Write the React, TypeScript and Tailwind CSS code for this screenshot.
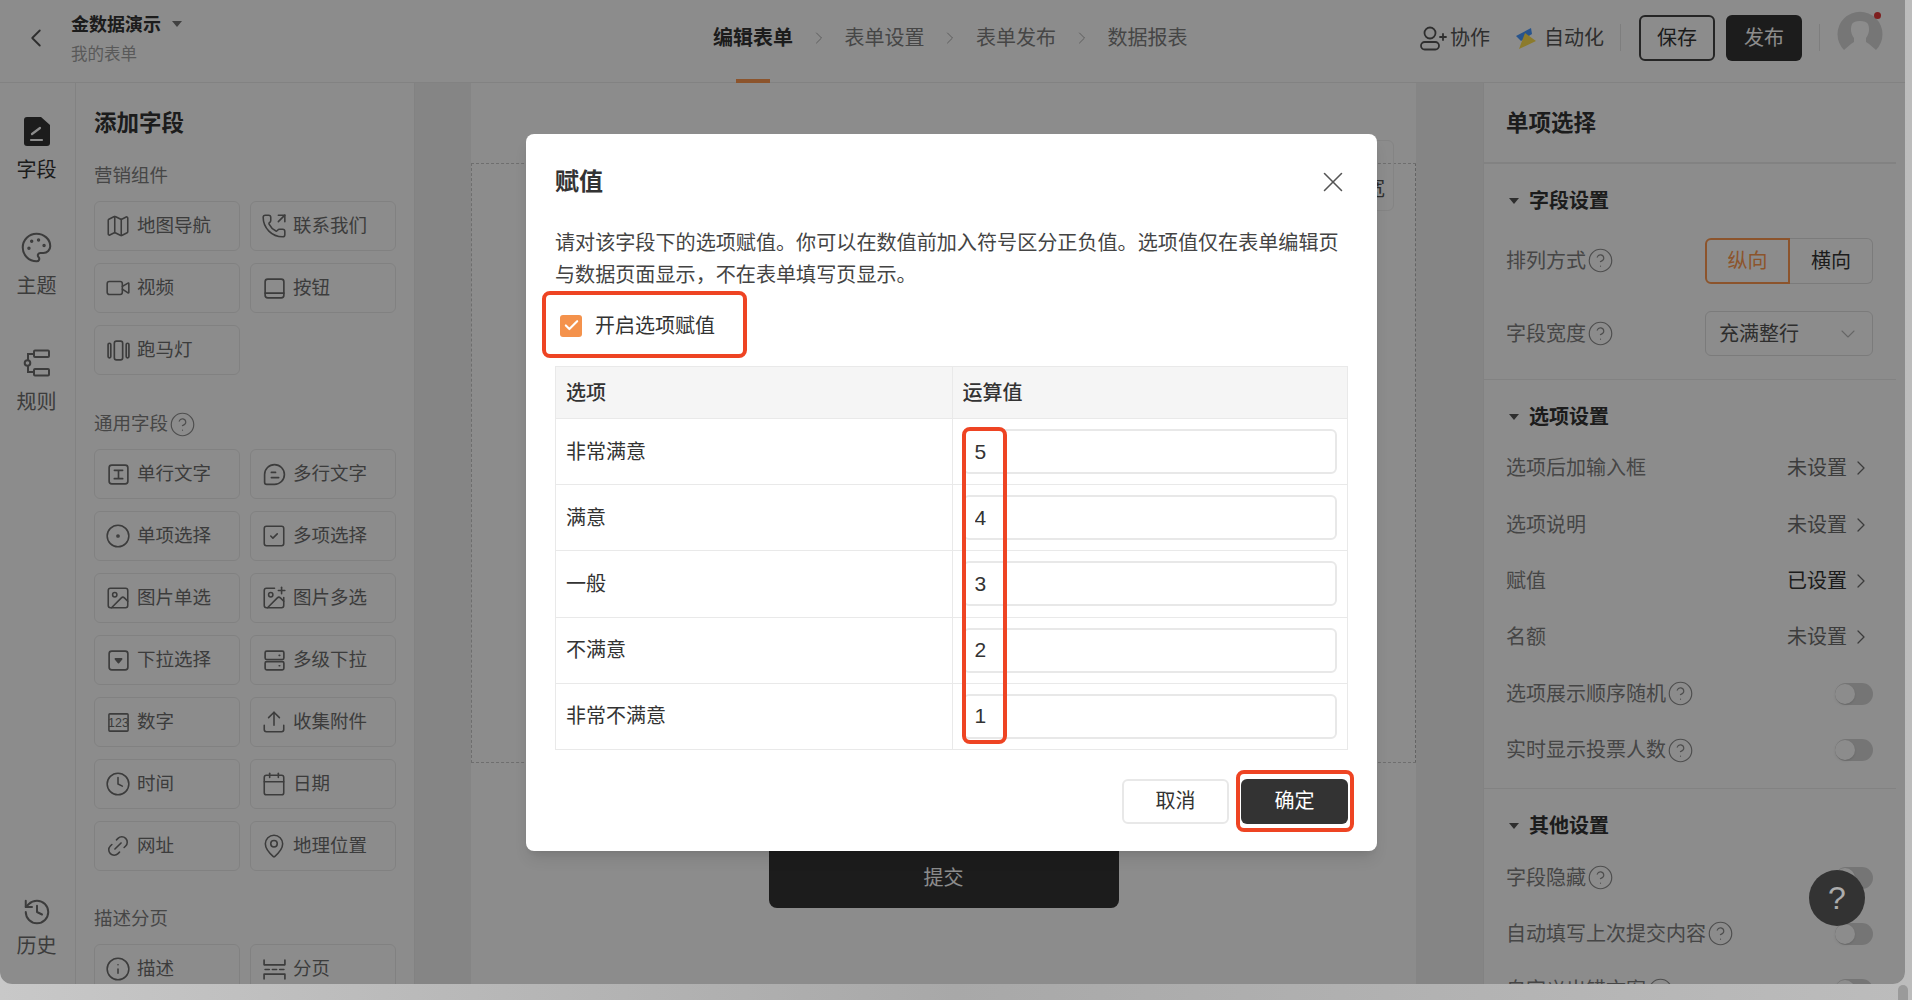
import type { ReactNode } from "react"
import {
  Calendar, Check, ChevronDown, ChevronLeft, ChevronRight, CircleDot, CircleHelp, Clock,
  History, ImagePlus, Image as ImageIcon, Info, Link2, Map as MapIcon, MapPin, Palette,
  PhoneOutgoing, SquareCheck, Upload, Video, X,
} from "lucide-react"

const FONT = "[font-family:'Liberation_Sans','Noto_Sans_CJK_SC',sans-serif]"

type IconProps = { children: ReactNode }

const Svg = ({ children }: IconProps) => (
  <svg width="25" height="25" viewBox="0 0 24 24" className="shrink-0" fill="none" stroke="currentColor" strokeWidth="1.6" strokeLinecap="round" strokeLinejoin="round">
    {children}
  </svg>
)

const lucide = { size: 26, strokeWidth: 1.45, className: "shrink-0" }

const fieldIcons: Record<string, ReactNode> = {
  地图导航: <MapIcon {...lucide} />,
  联系我们: <PhoneOutgoing {...lucide} />,
  视频: <Video {...lucide} />,
  按钮: <Svg><rect x="3" y="3" width="18" height="18" rx="2.5" /><path d="M3 16.5h18" /></Svg>,
  跑马灯: <Svg><rect x="8" y="3" width="8" height="18" rx="2" /><rect x="2" y="5" width="2.6" height="14" rx="1.2" /><rect x="19.4" y="5" width="2.6" height="14" rx="1.2" /></Svg>,
  单行文字: <Svg><rect x="3" y="3" width="18" height="18" rx="2.5" /><path d="M8 8h8M12 8v8M8 16h8" /></Svg>,
  多行文字: <Svg><path d="M12 2.5a9.5 9.5 0 1 1 0 19H4.5a2 2 0 0 1-2-2V12A9.5 9.5 0 0 1 12 2.5z" /><path d="M9 10h4M9 15h7" /></Svg>,
  单项选择: <CircleDot {...lucide} />,
  多项选择: <SquareCheck {...lucide} />,
  图片单选: <ImageIcon {...lucide} />,
  图片多选: <ImagePlus {...lucide} />,
  下拉选择: <Svg><rect x="3" y="3" width="18" height="18" rx="2.5" /><path d="M9 10.5h6l-3 3.5z" fill="currentColor" /></Svg>,
  多级下拉: <Svg><rect x="3" y="3" width="18" height="8" rx="1.5" /><rect x="3" y="13" width="18" height="8" rx="1.5" /><path d="M16.5 7h.5M16.5 17h.5" /></Svg>,
  数字: (
    <svg width="23" height="23" viewBox="0 0 24 24" className="shrink-0" fill="none" stroke="currentColor" strokeWidth="1.6">
      <rect x="2" y="3" width="20" height="18" rx="1" />
      <text x="12" y="17" textAnchor="middle" fontSize="13" stroke="none" fill="currentColor" fontFamily="Liberation Sans">123</text>
    </svg>
  ),
  收集附件: <Upload {...lucide} />,
  时间: <Clock {...lucide} />,
  日期: <Calendar {...lucide} />,
  网址: <Link2 {...lucide} className="shrink-0 -rotate-45" />,
  地理位置: <MapPin {...lucide} />,
  描述: <Info {...lucide} />,
  分页: <Svg><path d="M2 3v4.5h20V3M2 21v-4.5h20V21M3 12h4M10 12h4M17 12h4" /></Svg>,
}

const FieldButton = ({ label }: { label: string }) => (
  <div className="h-[50px] flex items-center gap-2 pl-[12px] border border-[#ececec] rounded-md text-[18.5px] text-[#6e6e6e]">
    <span className="w-[22px] flex justify-center">{fieldIcons[label]}</span>
    {label}
  </div>
)

const FieldGroup = ({ title, help, items, top }: { title: string; help?: boolean; items: string[]; top: string }) => (
  <>
    <div className={`${top} h-[26px] flex items-center text-[18.5px] text-[#808080]`}>
      {title}
      {help && <Help />}
    </div>
    <div className="mt-3 grid grid-cols-[146px_146px] gap-x-[10px] gap-y-3">
      {items.map((item) => <FieldButton key={item} label={item} />)}
    </div>
  </>
)

const RailItem = ({ icon, label, active }: { icon: ReactNode; label: string; active?: boolean }) => (
  <div className={`flex flex-col items-center h-[116px] text-[20px] ${active ? "text-[#333]" : "text-[#6e6e6e]"}`}>
    <div className="h-[32px] flex items-center">{icon}</div>
    <div className="mt-[9px] leading-[28px]">{label}</div>
  </div>
)

const Help = () => <CircleHelp size={27} strokeWidth={1.05} className="text-[#8f8f8f] ml-[1px] shrink-0" />

const SetRow = ({ label, value, dark }: { label: string; value: string; dark?: boolean }) => (
  <div className="h-[56.4px] flex items-center text-[20px] text-[#808080]">
    {label}
    <span className={`ml-auto ${dark ? "text-[#333]" : "text-[#6e6e6e]"}`}>{value}</span>
    <ChevronRight size={24} strokeWidth={1.3} className="ml-[2px] mr-[23px] text-[#6e6e6e]" />
  </div>
)

const ToggleRow = ({ label }: { label: string }) => (
  <div className="h-[56.4px] flex items-center text-[20px] text-[#808080] whitespace-nowrap">
    {label}
    <Help />
    <div className="ml-auto w-[38px] h-[22px] rounded-full bg-[#d6d6d6] relative mr-[23px]">
      <div className="absolute left-0 top-[1px] w-[20px] h-[20px] rounded-full bg-white shadow" />
    </div>
  </div>
)

const SectionTitle = ({ children }: { children: ReactNode }) => (
  <div className="h-[30px] flex items-center text-[20px] font-semibold text-[#333]">
    <span className="ml-[3px] mr-[10px] w-0 h-0 border-x-[5px] border-x-transparent border-t-[6px] border-t-[#555]" />
    {children}
  </div>
)

const rows = [
  ["非常满意", "5"],
  ["满意", "4"],
  ["一般", "3"],
  ["不满意", "2"],
  ["非常不满意", "1"],
]

export default function App() {
  return (
    <div className={`${FONT} h-[1000px] w-full overflow-hidden relative bg-gradient-to-r from-[#c8c8c8] via-[#a8a8a8] to-[#bcbcbc]`}>
      <div className="absolute right-[4px] top-[985px] w-[10px] h-[20px] rounded-full bg-[#9a9a9a]" />
      <div className="relative w-[1905px] h-[984px] flex flex-col overflow-hidden rounded-b-xl bg-white">
        {/* top bar */}
        <header className="h-[83px] shrink-0 flex items-center border-b border-[#ededed] pb-[7px]">
          <div className="w-[713px] shrink-0 flex items-center">
            <ChevronLeft size={30} strokeWidth={1.5} className="ml-[21px] mr-[5px] text-[#555]" />
            <div className="ml-[15px] mt-[2px]">
              <div className="flex items-center gap-[11px] text-[18px] font-semibold text-[#333] leading-[26px]">
                金数据演示
                <span className="w-0 h-0 border-x-[5px] border-x-transparent border-t-[6px] border-t-[#777] mb-[2px]" />
              </div>
              <div className="mt-[4px] text-[16.5px] text-[#a3a3a3] leading-[24px]">我的表单</div>
            </div>
          </div>
          <nav className="flex items-center text-[20px] text-[#808080]">
            <div className="relative font-semibold text-[#333] w-[80px]">
              编辑表单
              <span className="absolute left-[23px] top-[56px] w-[34px] h-[5px] bg-[#ff9a50]" />
            </div>
            <ChevronRight size={20} strokeWidth={1} className="mx-[15.75px] text-[#999]" />
            <span className="w-[80px]">表单设置</span>
            <ChevronRight size={20} strokeWidth={1} className="mx-[15.75px] text-[#999]" />
            <span className="w-[80px]">表单发布</span>
            <ChevronRight size={20} strokeWidth={1} className="mx-[15.75px] text-[#999]" />
            <span className="w-[80px]">数据报表</span>
          </nav>
          <div className="ml-auto flex items-center text-[20px] text-[#555] pr-[22px]">
            <svg width="28" height="26" viewBox="0 0 28 26" fill="none" stroke="currentColor" strokeWidth="1.8" strokeLinecap="round">
              <circle cx="11" cy="8" r="5.5" />
              <rect x="2" y="17" width="18" height="7.5" rx="3.7" />
              <path d="M21 12h6M24 9v6" />
            </svg>
            <span className="ml-[3px]">协作</span>
            <svg className="ml-[25px]" width="22" height="24" viewBox="0 0 22 24">
              <path d="M1 10 L16 2 L17 8 L6 15 Z" fill="#4a9aff" strokeLinejoin="round" />
              <path d="M10 7 L21 15 L4 23 Z" fill="#ffe050" strokeLinejoin="round" />
            </svg>
            <span className="ml-[7px]">自动化</span>
            <span className="ml-[16px] w-px h-[27px] bg-[#e6e6e6]" />
            <button className="ml-[18px] w-[76px] h-[46px] border-2 border-[#444] rounded-md text-[#333] text-[20px]">保存</button>
            <button className="ml-[11px] w-[76px] h-[46px] bg-[#333] rounded-md text-white text-[20px]">发布</button>
            <span className="ml-[17px] w-px h-[27px] bg-[#e6e6e6]" />
            <div className="relative ml-[17px] mb-[8px] w-[46px] h-[46px]">
              <svg width="46" height="46" viewBox="0 0 46 46">
                <path d="M7 39 A22.5 22.5 0 1 1 39 39 L32 33 L29 31 V27 C32 23 33 18 31 13 C29 9 17 9 15 13 C13 18 14 23 17 27 V31 L14 33 Z" fill="#d8d8d8" />
              </svg>
              <span className="absolute right-[2px] top-[1px] w-[7px] h-[7px] rounded-full bg-[#e63a3a]" />
            </div>
          </div>
        </header>

        <div className="flex flex-1 min-h-0">
          {/* left rail */}
          <aside className="w-[76px] shrink-0 border-r border-[#ededed] flex flex-col items-center pt-[32px] pb-[24px] pr-[2px]">
            <RailItem
              active
              label="字段"
              icon={
                <svg width="26" height="29" viewBox="0 0 26 29">
                  <path d="M3 0h14l9 8v18a3 3 0 0 1-3 3H3a3 3 0 0 1-3-3V3a3 3 0 0 1 3-3z" fill="#333" />
                  <path d="M7 23h11M8 17l8-6" stroke="#fff" strokeWidth="2.2" fill="none" strokeLinecap="round" />
                </svg>
              }
            />
            <RailItem label="主题" icon={<Palette size={33} strokeWidth={1.5} />} />
            <RailItem
              label="规则"
              icon={
                <svg width="28" height="28" viewBox="0 0 28 28" fill="none" stroke="currentColor" strokeWidth="2">
                  <rect x="11" y="1.5" width="15" height="6.5" rx="1" />
                  <rect x="11" y="20" width="15" height="6.5" rx="1" />
                  <circle cx="4.5" cy="14" r="2.8" />
                  <path d="M5 11V5h6M5 17v6h6" />
                </svg>
              }
            />
            <div className="mt-auto flex flex-col items-center text-[20px] text-[#6e6e6e]">
              <History size={30} strokeWidth={1.6} />
              <div className="mt-[5px] leading-[28px]">历史</div>
            </div>
          </aside>

          {/* field palette */}
          <aside className="w-[339px] shrink-0 border-r border-[#ededed] pl-[18px] pt-[26px] overflow-hidden">
            <div className="text-[22.5px] font-semibold text-[#333] leading-[30px]">添加字段</div>
            <FieldGroup top="mt-[24px]" title="营销组件" items={["地图导航", "联系我们", "视频", "按钮", "跑马灯"]} />
            <FieldGroup
              top="mt-[36px]"
              title="通用字段"
              help
              items={["单行文字", "多行文字", "单项选择", "多项选择", "图片单选", "图片多选", "下拉选择", "多级下拉", "数字", "收集附件", "时间", "日期", "网址", "地理位置"]}
            />
            <FieldGroup top="mt-[35px]" title="描述分页" items={["描述", "分页"]} />
          </aside>

          {/* canvas */}
          <main className="flex-1 bg-[#f3f3f3] pl-[56px] pr-[67px]">
            <div className="relative h-full bg-white pt-[80px]">
              <div className="h-[600px] border border-dashed border-[#c9c9c9] border-r-[#b5b5b5]" />
              <div className="absolute right-[22px] top-[57px] w-[80px] h-[71px] border border-[#f0f0f0] rounded-md text-[20px] text-[#555] flex items-center pl-[50px] pt-[26px]">
                宽
              </div>
              <div className="mt-[85px] mx-auto w-[350px] h-[60px] rounded-b-lg bg-[#333] text-white text-[20px] flex items-center justify-center">
                提交
              </div>
            </div>
          </main>

          {/* settings */}
          <aside className="w-[422px] shrink-0 border-l border-[#ededed] overflow-hidden">
            <div className="h-[81px] mr-[9px] pl-[22px] pt-[26px] border-b-2 border-[#ededed] text-[22.5px] font-semibold text-[#333] leading-[30px]">单项选择</div>
            <section className="mr-[9px] pl-[22px] pt-[22px] pb-[9px] border-b border-[#ededed]">
              <SectionTitle>字段设置</SectionTitle>
              <div className="mt-[8px] h-[73px] flex items-center text-[20px] text-[#808080]">
                排列方式<Help />
                <div className="ml-auto mr-[23px] flex w-[168px] h-[46px] text-[20px]">
                  <div className="w-[85px] border-2 border-[#ff9a50] rounded-l-md text-[#ff9a50] flex items-center justify-center">纵向</div>
                  <div className="flex-1 border border-l-0 border-[#e0e0e0] rounded-r-md text-[#333] flex items-center justify-center">横向</div>
                </div>
              </div>
              <div className="h-[73px] flex items-center text-[20px] text-[#808080]">
                字段宽度<Help />
                <div className="ml-auto mr-[23px] w-[168px] h-[45px] border border-[#e0e0e0] rounded-md flex items-center pl-[13px] text-[#555]">
                  充满整行
                  <ChevronDown size={24} strokeWidth={1.1} className="ml-auto mr-[12px] text-[#bbb]" />
                </div>
              </div>
            </section>
            <section className="mr-[9px] pl-[22px] pt-[22px] pb-[10px] border-b border-[#ededed]">
              <SectionTitle>选项设置</SectionTitle>
              <div className="mt-[8px]">
                <SetRow label="选项后加输入框" value="未设置" />
                <SetRow label="选项说明" value="未设置" />
                <SetRow label="赋值" value="已设置" dark />
                <SetRow label="名额" value="未设置" />
                <ToggleRow label="选项展示顺序随机" />
                <ToggleRow label="实时显示投票人数" />
              </div>
            </section>
            <section className="mr-[9px] pl-[22px] pt-[22px]">
              <SectionTitle>其他设置</SectionTitle>
              <div className="mt-[8px]">
                <ToggleRow label="字段隐藏" />
                <ToggleRow label="自动填写上次提交内容" />
                <ToggleRow label="自定义出错文案" />
              </div>
            </section>
          </aside>
        </div>

        {/* dim layer */}
        <div className="absolute inset-0 bg-black/45" />

        <div className="absolute right-[40px] top-[870px] w-[56px] h-[56px] rounded-full bg-[#333] text-white/60 text-[32px] flex items-center justify-center">?</div>

        {/* modal */}
        <div className="absolute left-[526px] top-[134px] w-[851px] h-[717px] bg-white rounded-lg shadow-lg px-[29px] pt-[32px] text-[#333]">
          <div className="flex items-center justify-between h-[32px]">
            <div className="text-[24px] font-semibold leading-[32px]">赋值</div>
            <X size={34} strokeWidth={1.1} className="-mr-[2px] text-[#555]" />
          </div>
          <p className="mt-[29px] text-[20.1px] leading-[32px] text-[#444]">
            请对该字段下的选项赋值。你可以在数值前加入符号区分正负值。选项值仅在表单编辑页与数据页面显示，不在表单填写页显示。
          </p>
          <div className="-ml-[13px] w-[205px] h-[67px] border-4 border-[#ee4423] rounded-lg flex items-center pl-[14px] pt-[2px] gap-[13px] text-[20px]">
            <span className="w-[22px] h-[22px] rounded-[3px] bg-[#f4924c] flex items-center justify-center text-white">
              <Check size={17} strokeWidth={3} />
            </span>
            开启选项赋值
          </div>
          <div className="relative mt-[8px] border border-[#e9e9e9] text-[20px]">
            <div className="grid grid-cols-2 h-[51px] bg-[#f5f5f5] font-medium items-center">
              <div className="pl-[10px]">选项</div>
              <div className="pl-[10px] h-full flex items-center border-l border-[#e9e9e9]">运算值</div>
            </div>
            {rows.map(([name, value]) => (
              <div key={name} className="grid grid-cols-2 h-[66.2px] border-t border-[#e9e9e9]">
                <div className="pl-[10px] flex items-center">{name}</div>
                <div className="pl-[10px] pr-[10px] border-l border-[#e9e9e9] flex items-center">
                  <input readOnly value={value} className="w-full h-[45px] border-2 border-[#e8e8e8] rounded-md pl-[10px] text-[21px] text-[#333]" />
                </div>
              </div>
            ))}
            <div className="absolute left-[406px] top-[60px] w-[45px] h-[317px] border-4 border-[#ee4423] rounded-lg" />
          </div>
          <div className="mt-[29px] flex justify-end gap-3 text-[20px]">
            <button className="w-[107px] h-[45px] border-2 border-[#e8e8e8] rounded-md">取消</button>
            <button className="relative w-[107px] h-[45px] bg-[#333] rounded-md text-white">
              确定
              <span className="absolute -left-[5px] -right-[6px] -top-[9px] -bottom-[8px] border-4 border-[#ee4423] rounded-lg" />
            </button>
          </div>
        </div>
      </div>
    </div>
  )
}
